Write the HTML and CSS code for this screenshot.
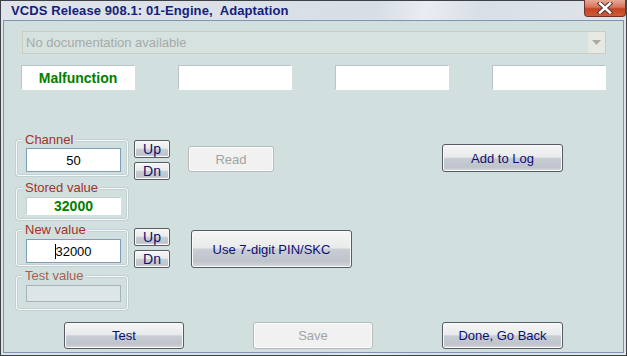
FILE: index.html
```html
<!DOCTYPE html>
<html lang="en">
  <head>
    <meta charset="UTF-8" />
    <meta name="viewport" content="width=device-width, initial-scale=1.0" />
    <title>VCDS Adaptation</title>
    <link rel="stylesheet" href="styles.css">
  </head>
  <body>
    <div class="window">
      <div class="titlebar">
        <span class="title">VCDS Release 908.1: 01-Engine,&nbsp; Adaptation</span>
        <div class="close">
          <svg width="20" height="12" viewBox="0 0 20 12" xmlns="http://www.w3.org/2000/svg">
            <path d="M5 1.5 L15 10.5 M15 1.5 L5 10.5" stroke="#4a3a3a" stroke-width="4.4" stroke-linecap="square"></path>
            <path d="M5 1.5 L15 10.5 M15 1.5 L5 10.5" stroke="#fff" stroke-width="2.4" stroke-linecap="square"></path>
          </svg>
        </div>
      </div>

      <div class="client">
        <div class="combo">
          <span class="combo-text">No documentation available</span>
          <span class="combo-arrow">
            <svg width="9" height="5" viewBox="0 0 9 5" xmlns="http://www.w3.org/2000/svg">
              <path d="M0 0 H9 L4.5 5 Z" fill="#a9aca4"></path>
            </svg>
          </span>
        </div>

        <div class="status-row">
          <div class="status-box">Malfunction</div>
          <div class="status-box"></div>
          <div class="status-box"></div>
          <div class="status-box"></div>
        </div>

        <div class="main">
          <div class="row row-channel">
            <div class="group group-channel">
              <span class="group-label">Channel</span>
              <div class="field">50</div>
            </div>
            <div class="updn">
              <button class="btn btn-small">Up</button>
              <button class="btn btn-small">Dn</button>
            </div>
            <button class="btn btn-read" disabled>Read</button>
            <button class="btn btn-log">Add to Log</button>
          </div>

          <div class="row row-stored">
            <div class="group group-stored">
              <span class="group-label">Stored value</span>
              <div class="field field-stored">32000</div>
            </div>
          </div>

          <div class="row row-new">
            <div class="group group-new">
              <span class="group-label">New value</span>
              <div class="field"><span class="caret"></span>32000</div>
            </div>
            <div class="updn updn-new">
              <button class="btn btn-small">Up</button>
              <button class="btn btn-small">Dn</button>
            </div>
            <button class="btn btn-pin">Use 7-digit PIN/SKC</button>
          </div>

          <div class="row row-test">
            <div class="group group-test">
              <span class="group-label label-dim">Test value</span>
              <div class="field field-test"></div>
            </div>
          </div>
        </div>

        <div class="footer">
          <button class="btn btn-wide">Test</button>
          <button class="btn btn-wide" disabled>Save</button>
          <button class="btn btn-wide">Done, Go Back</button>
        </div>
      </div>
    </div>
  </body>
</html>
```

FILE: styles.css
```css
:root {
  --client-bg: #d1dfdf;
  --label-color: #a0342a;
  --btn-text: #0c1070;
}
body {
  margin: 0;
  font-family: "Liberation Sans", Arial, sans-serif;
  font-size: 13px;
}
.window {
  width: 627px;
  height: 356px;
  box-sizing: border-box;
  border: 1px solid #3e4246;
  padding: 0 2px 2px;
  display: flex;
  flex-direction: column;
  background: linear-gradient(100deg, #dfe4ea 0%, #d8dee6 55%, #e9edf2 62%, #d9dfe7 70%, #e2e6ec 100%);
}
.titlebar {
  height: 19px;
  position: relative;
  padding-left: 8px;
  display: flex;
  align-items: center;
}
.title {
  font-weight: bold;
  font-size: 13px;
  color: #14207a;
  letter-spacing: 0.1px;
}
.close {
  position: absolute;
  top: -1px;
  right: -2px;
  width: 40px;
  height: 16px;
  border: 1px solid #70322a;
  border-top: none;
  border-radius: 0 0 4px 4px;
  background: linear-gradient(#e7a995, #d8735a 45%, #c44424 55%, #cf5a38);
  display: flex;
  align-items: center;
  justify-content: center;
}
.client {
  flex: 1;
  background: var(--client-bg);
  border: 1px solid #7f93b2;
}
/* --------------- */
.combo {
  margin: 10px 0 0 18px;
  width: 584px;
  height: 23px;
  box-sizing: border-box;
  border: 1px solid #cbcdc0;
  background: #d6e2e0;
  display: flex;
  align-items: center;
}
.combo-text {
  flex: 1;
  padding-left: 3px;
  color: #a6aaa8;
}
.combo-arrow {
  width: 17px;
  height: 21px;
  background: #e6e9e2;
  display: flex;
  align-items: center;
  justify-content: center;
}
.status-row {
  margin-top: 11px;
  padding-left: 17px;
  display: flex;
  gap: 43px;
}
.status-box {
  width: 114px;
  height: 25px;
  box-sizing: border-box;
  background: #fff;
  border: 1px solid #fff;
  border-top-color: #b7c4c8;
  border-left-color: #b7c4c8;
  color: #008000;
  font-weight: bold;
  font-size: 14px;
  display: flex;
  align-items: center;
  justify-content: center;
}
/* --------------- */
.main {
  padding-left: 12px;
}
.row {
  display: flex;
  align-items: flex-start;
}
.row-channel {
  margin-top: 50px;
}
.row-stored,
.row-new,
.row-test {
  margin-top: 8px;
}
.group {
  position: relative;
  width: 112px;
  box-sizing: border-box;
  border: 1px solid #f6fafa;
  border-radius: 3px;
  box-shadow: 0 0 0 1px #c3d0d0, inset 0 0 0 1px #c3d0d0;
  padding: 8px 0 0 9px;
}
.group-channel {
  height: 36px;
  padding-top: 7px;
}
.group-stored {
  height: 32px;
}
.group-new {
  height: 36px;
  margin-top: 2px;
}
.group-test {
  height: 34px;
}
.group-label {
  position: absolute;
  top: -9px;
  left: 6px;
  padding: 0 2px;
  background: var(--client-bg);
  color: var(--label-color);
  line-height: 15px;
}
.label-dim {
  color: #a8604f;
}
.field {
  width: 95px;
  height: 24px;
  box-sizing: border-box;
  background: #fff;
  border: 1px solid #7f9db9;
  display: flex;
  align-items: center;
  justify-content: center;
  color: #000;
}
.field-stored {
  height: 18px;
  border-color: #fff;
  border-top-color: #c3cccf;
  border-left-color: #c3cccf;
  color: #008000;
  font-weight: bold;
  font-size: 14px;
}
.field-test {
  height: 17px;
  background: #dde6e6;
  border-color: #aab3b3;
}
.caret {
  width: 1px;
  height: 15px;
  background: #000;
  margin-right: -1px;
}
/* --------------- */
.btn {
  box-sizing: border-box;
  padding: 0;
  font-family: "Liberation Sans", Arial, sans-serif;
  font-size: 13px;
  color: var(--btn-text);
  border: 1px solid #555b62;
  border-radius: 3px;
  box-shadow: inset 0 0 0 1px #fbfbfb;
  background: linear-gradient(#f6f6f6, #e9eaeb 46%, #c8ccd3 52%, #bfc4cc 85%, #d6d9de);
  display: flex;
  align-items: center;
  justify-content: center;
}
.btn:disabled {
  color: #a3a3a3;
  border-color: #b6bab9;
  background: #f0f1f0;
  box-shadow: inset 0 0 0 1px #fdfdfd;
}
.updn {
  margin-left: 6px;
  display: flex;
  flex-direction: column;
  gap: 4px;
}
.btn-small {
  width: 36px;
  height: 18px;
  border-radius: 2px;
  font-size: 14px;
}
.btn-read {
  margin: 6px 0 0 18px;
  width: 86px;
  height: 26px;
}
.btn-log {
  margin: 4px 0 0 168px;
  width: 121px;
  height: 28px;
}
.btn-pin {
  margin: 2px 0 0 21px;
  width: 161px;
  height: 38px;
}
.footer {
  margin-top: 12px;
  padding-left: 60px;
  display: flex;
  gap: 69px;
}
.btn-wide {
  width: 120px;
  height: 27px;
}
.btn-wide:last-child {
  width: 121px;
}
```
